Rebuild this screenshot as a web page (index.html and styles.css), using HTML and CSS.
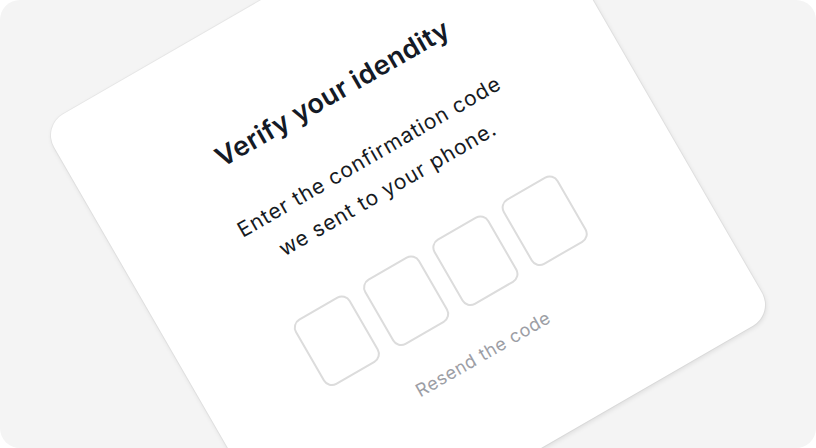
FILE: index.html
```html
<!DOCTYPE html>
<html lang="en">
<head>
<meta charset="utf-8">
<title>Verify your identity</title>
<link rel="stylesheet" href="styles.css">
</head>
<body>
<div class="stage">
  <div class="card">
    <h1 class="title">Verify your idendity</h1>
    <p class="lead">Enter the confirmation code<br>we sent to your phone.</p>
    <div class="code">
      <div class="digit"></div>
      <div class="digit"></div>
      <div class="digit"></div>
      <div class="digit"></div>
    </div>
    <a class="resend">Resend the code</a>
  </div>
</div>
</body>
</html>
```
FILE: styles.css
```css
* { box-sizing: border-box; }
html, body { margin: 0; padding: 0; background: #ffffff; }
body { font-family: "Inter", "Lato", sans-serif; }

.stage {
  width: 816px;
  height: 448px;
  border-radius: 20px;
  background: #f4f4f4;
  overflow: hidden;
  display: flex;
  align-items: center;
  justify-content: center;
}

.card {
  flex: none;
  width: 540px;
  height: 528px;
  background: #ffffff;
  border-radius: 24px;
  box-shadow: 0 0 0 1px rgba(0,0,0,0.04), 0 2px 5px rgba(0,0,0,0.10);
  transform: translateY(-4px) rotate(-30deg);
  display: flex;
  flex-direction: column;
  align-items: center;
  padding: 101px 4px 0 0;
}

.title {
  margin: 0;
  font-size: 27px;
  line-height: 32px;
  font-weight: 600;
  letter-spacing: 0.4px;
  color: #141a26;
}

.lead {
  margin: 38px 0 0;
  font-size: 21px;
  line-height: 37px;
  letter-spacing: 0.9px;
  text-align: center;
  color: #161a22;
}

.code {
  margin-top: 50px;
  display: flex;
  gap: 16px;
}

.digit {
  width: 64px;
  height: 76px;
  border: 2px solid #dcdcdc;
  border-radius: 10px;
}

.resend {
  margin-top: 35px;
  font-size: 18px;
  line-height: 24px;
  letter-spacing: 0.6px;
  color: #9c9ea5;
}
```
